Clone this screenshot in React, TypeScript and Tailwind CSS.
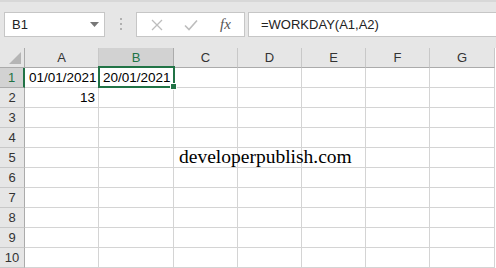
import React from "react";

const cols = ["A", "B", "C", "D", "E", "F", "G"];
const rows = [1, 2, 3, 4, 5, 6, 7, 8, 9, 10];

const sans = { fontFamily: '"Liberation Sans", Arial, sans-serif' };

function Cell({ row, col }: { row: number; col: string }) {
  const selected = row === 1 && col === "B";
  return (
    <div className="relative h-[20px] border-r border-b border-[#d4d4d4] bg-white text-[13.5px] text-black leading-[19px]">
      {row === 1 && col === "A" && <div className="pl-[4px]">01/01/2021</div>}
      {row === 1 && col === "B" && <div className="pl-[4px]">20/01/2021</div>}
      {row === 2 && col === "A" && <div className="pr-[3px] text-right">13</div>}
      {row === 5 && col === "C" && (
        <div
          className="absolute left-[5px] top-[-2px] z-10 whitespace-nowrap text-[19.5px] leading-[22px] text-black"
          style={{ fontFamily: '"Liberation Serif", "Times New Roman", serif' }}
        >
          developerpublish.com
        </div>
      )}
      {selected && (
        <div className="absolute -left-[1px] -top-[2px] right-[-2px] bottom-[-1px] z-20 border-2 border-[#217346]">
          <div className="absolute -right-[4px] -bottom-[4px] h-[7px] w-[7px] border border-white bg-[#217346]" />
        </div>
      )}
    </div>
  );
}

export default function App() {
  return (
    <div className="w-[496px] h-[268px] overflow-hidden bg-white" style={sans}>
      {/* formula bar */}
      <div className="flex h-[48px] items-start border-t-2 border-[#d8d8d8] bg-[#e6e6e6] pt-[10px]">
        <div className="ml-[4px] flex h-[25px] w-[101px] items-center justify-between border border-[#c6c6c6] bg-white pl-[7px] pr-[5px] text-[13px] text-[#222]">
          <span>B1</span>
          <svg width="9" height="5" viewBox="0 0 9 5">
            <path d="M0 0h9L4.5 5z" fill="#777" />
          </svg>
        </div>
        <div className="flex w-[31px] flex-col items-center gap-[3px] pt-[6px]">
          <div className="h-[2px] w-[2px] bg-[#b0b0b0]" />
          <div className="h-[2px] w-[2px] bg-[#b0b0b0]" />
          <div className="h-[2px] w-[2px] bg-[#b0b0b0]" />
        </div>
        <div className="flex h-[25px] w-[109px] items-center border border-[#c6c6c6] bg-white">
          <svg className="ml-[14px]" width="12" height="12" viewBox="0 0 12 12">
            <path d="M1 1l10 10M11 1L1 11" stroke="#bdbdbd" strokeWidth="1.3" />
          </svg>
          <svg className="ml-[21px]" width="14" height="12" viewBox="0 0 14 12">
            <path d="M1 6.5l4 4L13 1.5" stroke="#bdbdbd" strokeWidth="1.6" fill="none" />
          </svg>
          <span
            className="ml-[22px] text-[15px] italic text-[#555]"
            style={{ fontFamily: '"Liberation Serif", "Times New Roman", serif' }}
          >
            fx
          </span>
        </div>
        <div className="ml-[3px] flex h-[25px] flex-1 items-center border-y border-l border-[#c6c6c6] bg-white pl-[12px] text-[13px] text-[#222]">
          =WORKDAY(A1,A2)
        </div>
      </div>

      {/* sheet grid */}
      <div className="grid grid-cols-[25px_74px_75px_64px_64px_64px_64px_65px]">
        <div className="relative h-[20px] border-r border-b border-[#ababab] bg-[#e6e6e6]">
          <svg className="absolute right-[3px] bottom-[3px]" width="12" height="12" viewBox="0 0 12 12">
            <path d="M12 0V12H0z" fill="#b5b5b5" />
          </svg>
        </div>
        {cols.map((c) => (
          <div
            key={c}
            className={`flex h-[20px] items-center justify-center border-r border-b text-[13px] ${
              c === "B"
                ? "border-r-[#ababab] border-b-[#217346] bg-[#d2d2d2] text-[#217346]"
                : "border-r-[#c8c8c8] border-b-[#ababab] bg-[#e6e6e6] text-[#333]"
            }`}
          >
            {c}
          </div>
        ))}
        {rows.map((r) => (
          <React.Fragment key={r}>
            <div
              className={`flex h-[20px] items-center justify-center border-r border-b text-[13px] ${
                r === 1
                  ? "border-r-2 border-r-[#217346] border-b-[#ababab] bg-[#d2d2d2] text-[#217346]"
                  : "border-r-[#ababab] border-b-[#c8c8c8] bg-[#e6e6e6] text-[#333]"
              }`}
            >
              {r}
            </div>
            {cols.map((c) => (
              <Cell key={c} row={r} col={c} />
            ))}
          </React.Fragment>
        ))}
      </div>
    </div>
  );
}
